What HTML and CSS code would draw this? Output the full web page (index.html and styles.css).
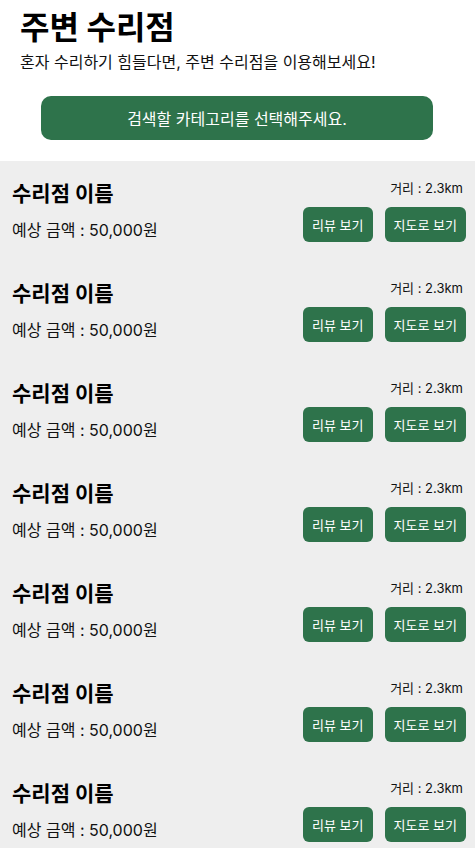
FILE: index.html
```html
<!DOCTYPE html>
<html lang="ko">
<head>
<meta charset="utf-8">
<link rel="stylesheet" href="styles.css">
</head>
<body>
<header class="head">
  <h1 class="title">주변 수리점</h1>
  <p class="sub">혼자 수리하기 힘들다면, 주변 수리점을 이용해보세요!</p>
  <button class="cat">검색할 카테고리를 선택해주세요.</button>
</header>
<main class="list">
  <div class="row"><div class="info"><div class="name">수리점 이름</div><div class="price">예상 금액 : 50,000원</div></div><div class="side"><div class="dist">거리 : 2.3km</div><div class="btns"><button class="btn">리뷰 보기</button><button class="btn">지도로 보기</button></div></div></div>
  <div class="row"><div class="info"><div class="name">수리점 이름</div><div class="price">예상 금액 : 50,000원</div></div><div class="side"><div class="dist">거리 : 2.3km</div><div class="btns"><button class="btn">리뷰 보기</button><button class="btn">지도로 보기</button></div></div></div>
  <div class="row"><div class="info"><div class="name">수리점 이름</div><div class="price">예상 금액 : 50,000원</div></div><div class="side"><div class="dist">거리 : 2.3km</div><div class="btns"><button class="btn">리뷰 보기</button><button class="btn">지도로 보기</button></div></div></div>
  <div class="row"><div class="info"><div class="name">수리점 이름</div><div class="price">예상 금액 : 50,000원</div></div><div class="side"><div class="dist">거리 : 2.3km</div><div class="btns"><button class="btn">리뷰 보기</button><button class="btn">지도로 보기</button></div></div></div>
  <div class="row"><div class="info"><div class="name">수리점 이름</div><div class="price">예상 금액 : 50,000원</div></div><div class="side"><div class="dist">거리 : 2.3km</div><div class="btns"><button class="btn">리뷰 보기</button><button class="btn">지도로 보기</button></div></div></div>
  <div class="row"><div class="info"><div class="name">수리점 이름</div><div class="price">예상 금액 : 50,000원</div></div><div class="side"><div class="dist">거리 : 2.3km</div><div class="btns"><button class="btn">리뷰 보기</button><button class="btn">지도로 보기</button></div></div></div>
  <div class="row"><div class="info"><div class="name">수리점 이름</div><div class="price">예상 금액 : 50,000원</div></div><div class="side"><div class="dist">거리 : 2.3km</div><div class="btns"><button class="btn">리뷰 보기</button><button class="btn">지도로 보기</button></div></div></div>
</main>
</body>
</html>
```
FILE: styles.css
```css
* { box-sizing: border-box; }
html, body { margin: 0; padding: 0; }
body {
  font-family: "Inter", "Noto Sans CJK KR", sans-serif;
  color: #111;
  background: #eeeeee;
}
.head {
  background: #fff;
  padding: 8px 20px 21px 20px;
  display: flex;
  flex-direction: column;
}
.title {
  margin: 0;
  font-size: 32px;
  font-weight: 700;
  line-height: 40px;
  color: #000;
}
.sub {
  margin: 3px 0 0 0;
  font-size: 16px;
  line-height: 22px;
}
.cat {
  margin: 23px 22px 0 21px;
  height: 44px;
  border: none;
  border-radius: 10px;
  background: #2e734b;
  color: #fff;
  font-family: inherit;
  font-size: 16px;
}
.list { display: flex; flex-direction: column; }
.row {
  height: 100px;
  display: flex;
  justify-content: space-between;
  padding: 18px 9px 0 12px;
}
.info { display: flex; flex-direction: column; }
.name {
  font-size: 21px;
  font-weight: 700;
  line-height: 30px;
  color: #000;
}
.price {
  margin-top: 10px;
  font-size: 16px;
  line-height: 22px;
}
.side { display: flex; flex-direction: column; align-items: flex-end; }
.dist {
  font-size: 13px;
  line-height: 18px;
  margin-right: 3px;
}
.btns { display: flex; gap: 12px; margin-top: 10px; }
.btn {
  height: 35px;
  padding: 0 9px;
  border: none;
  border-radius: 6px;
  background: #2e734b;
  color: #fff;
  font-family: inherit;
  font-size: 13px;
}
```
